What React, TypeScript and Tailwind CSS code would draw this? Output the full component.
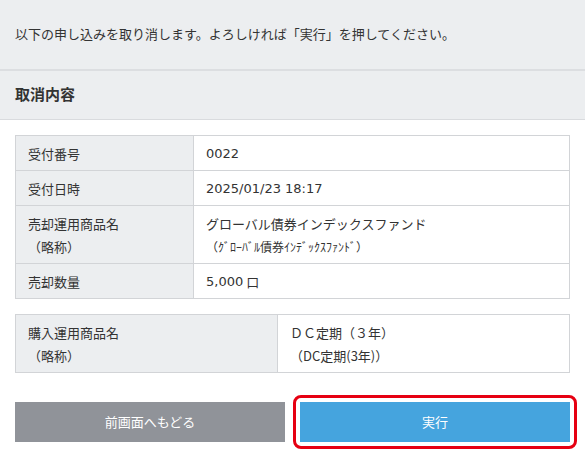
export default function App() {
  return (
    <div className="min-h-[456px] w-full bg-white text-[13px] text-[#333333] [font-family:'Noto_Sans_CJK_JP','Noto_Sans',sans-serif]">
      <div className="flex h-[69px] items-center bg-[#eceef0] px-[15px] pb-[3px]">
        <p className="leading-[23px]">
          以下の申し込みを取り消します。よろしければ「実行」を押してください。
        </p>
      </div>

      <div className="flex h-[51px] items-center border-t-2 border-b border-t-[#dcdee1] border-b-[#d9dbde] bg-[#eceef0] px-[15px] pb-[3px]">
        <h2 className="text-[15px] font-bold leading-[23px] text-[#333333]">取消内容</h2>
      </div>

      <div className="px-[15px] pt-[15px]">
        <table className="w-full border-collapse">
          <tbody>
            <Row label="受付番号">
              <Num>0022</Num>
            </Row>
            <Row label="受付日時">
              <Num>2025/01/23 18:17</Num>
            </Row>
            <Row
              label={
                <>
                  売却運用商品名
                  <br />
                  （略称）
                </>
              }
            >
              グローバル債券インデックスファンド
              <br />
              <span className="text-[12px]">（ｸﾞﾛｰﾊﾞﾙ債券ｲﾝﾃﾞｯｸｽﾌｧﾝﾄﾞ）</span>
            </Row>
            <Row label="売却数量">
              <Num>5,000</Num> 口
            </Row>
          </tbody>
        </table>

        <table className="mt-[15px] w-full border-collapse">
          <tbody>
            <Row
              wide
              label={
                <>
                  購入運用商品名
                  <br />
                  （略称）
                </>
              }
            >
              ＤＣ定期（３年）
              <br />
              （DC定期(3年)）
            </Row>
          </tbody>
        </table>

        <div className="mt-[29px] grid grid-cols-2 gap-[15px]">
          <button
            type="button"
            className="h-[40px] bg-[#909399] text-[13px] text-white"
          >
            前画面へもどる
          </button>
          <div className="-m-[7px] rounded-[8px] border-[3px] border-[#e60012] p-[4px]">
            <button
              type="button"
              className="h-[40px] w-full bg-[#45a4de] text-[13px] text-white"
            >
              実行
            </button>
          </div>
        </div>
      </div>
    </div>
  );
}

function Num({ children }: { children: React.ReactNode }) {
  return (
    <span className="inline-block h-[23px] align-top leading-[23px] [font-family:'DejaVu_Sans',sans-serif]">
      {children}
    </span>
  );
}

function Row({
  label,
  children,
  wide = false,
}: {
  label: React.ReactNode;
  children: React.ReactNode;
  wide?: boolean;
}) {
  return (
    <tr>
      <th
        className={`border border-[#d2d4d7] bg-[#eceef0] px-3 pt-[6px] pb-[5px] text-left align-top font-normal leading-[23px] ${
          wide ? "w-[262px]" : "w-[178px]"
        }`}
      >
        {label}
      </th>
      <td className="border border-[#d2d4d7] bg-white px-3 pt-[6px] pb-[5px] align-top leading-[23px]">
        {children}
      </td>
    </tr>
  );
}
